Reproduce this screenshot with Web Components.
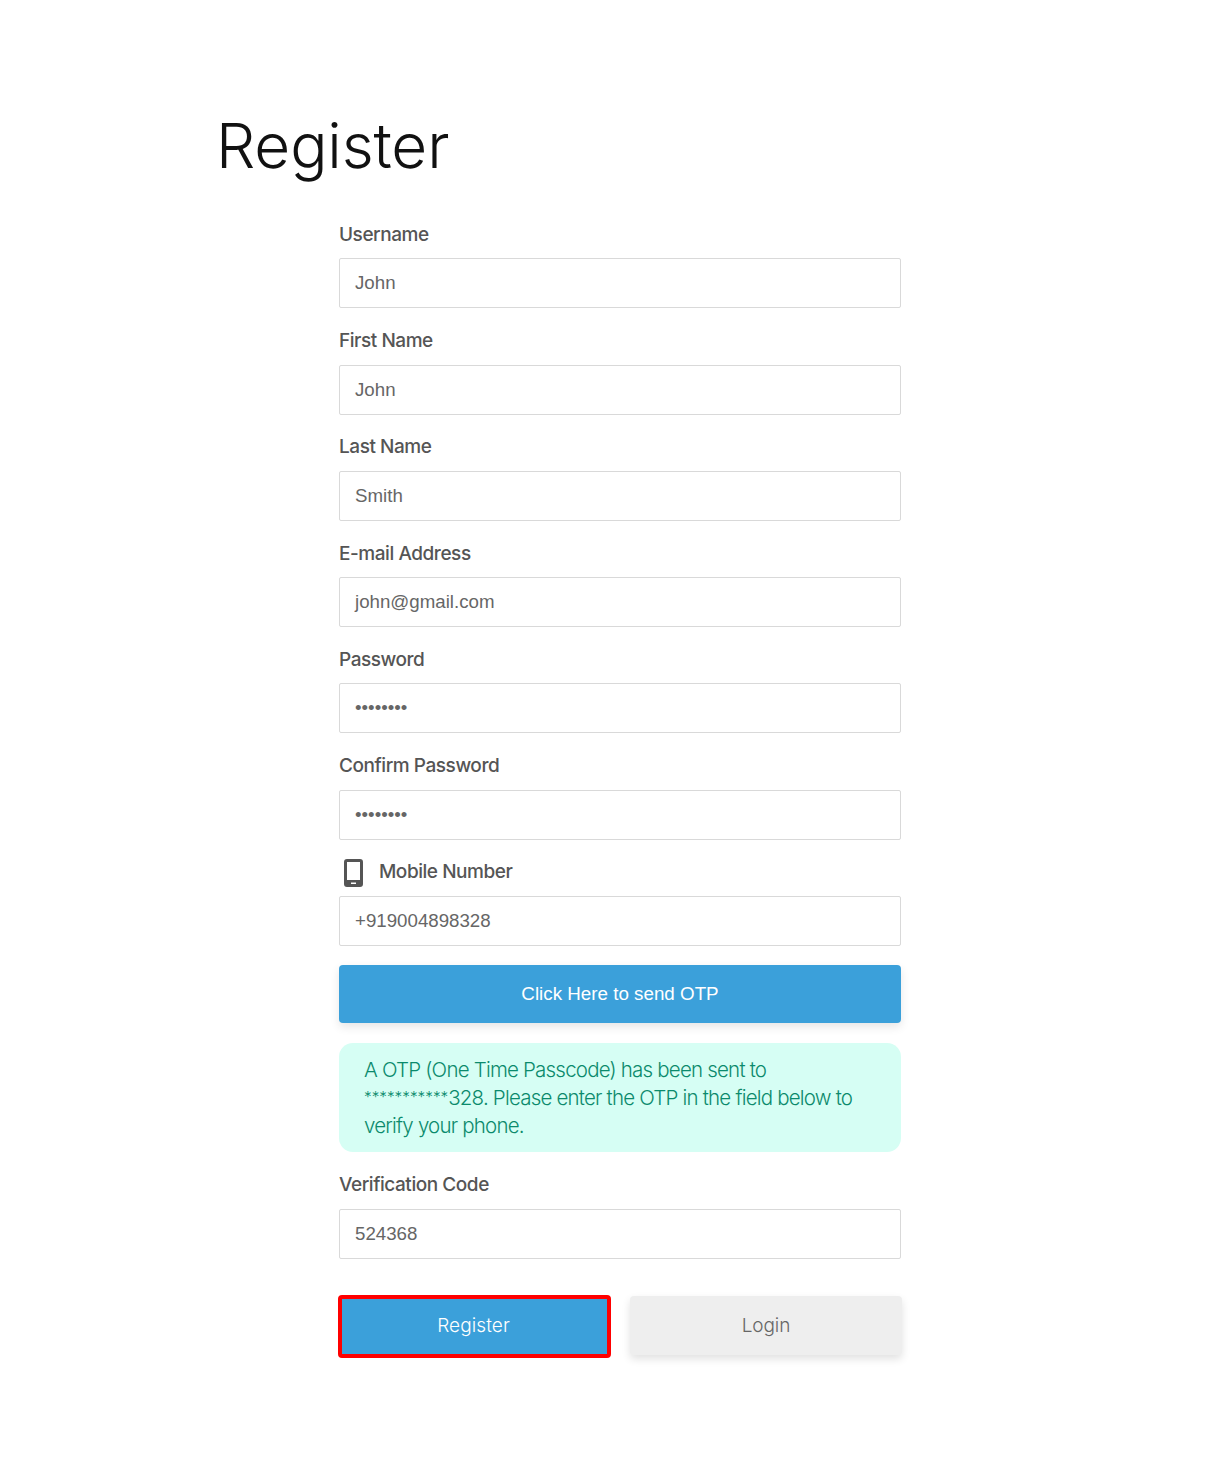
<!DOCTYPE html>
<html>
<head>
<meta charset="utf-8">
<title>Register</title>
<style>
  html, body { margin: 0; background: #fff; }
</style>
</head>
<body>
<register-page>
  <form-field label="Username" value="John"></form-field>
  <form-field label="First Name" value="John"></form-field>
  <form-field label="Last Name" value="Smith"></form-field>
  <form-field label="E-mail Address" value="john@gmail.com"></form-field>
  <form-field label="Password" value="••••••••"></form-field>
  <form-field label="Confirm Password" value="••••••••"></form-field>
  <form-field label="Mobile Number" value="+919004898328" phone></form-field>
  <otp-button>Click Here to send OTP</otp-button>
  <otp-alert>A OTP (One Time Passcode) has been sent to <span style="font-size:15.300px;letter-spacing:0;vertical-align:2px">***********</span>328. Please enter the OTP in the field below to<br>verify your phone.</otp-alert>
  <form-field label="Verification Code" value="524368" code></form-field>
  <form-actions></form-actions>
</register-page>

<script>
class RegisterPage extends HTMLElement {
  constructor() {
    super()
    this.attachShadow({ mode: 'open' }).innerHTML = `
      <style>
        :host {
          display: block;
          height: 1462px;
          padding: 104px 0 0 216px;
          box-sizing: border-box;
          font-family: Inter, "Liberation Sans", sans-serif;
        }
        h1 {
          margin: 0 0 30.450px;
          height: 84px;
          line-height: 84px;
          font-size: 62px;
          font-weight: 300;
          color: #111;
          letter-spacing: -0.15px;
        }
        .form {
          width: 562px;
          margin-left: 123px;
        }
      </style>
      <h1>Register</h1>
      <div class="form"><slot></slot></div>
    `
  }
}
customElements.define('register-page', RegisterPage)

class FormField extends HTMLElement {
  constructor() {
    super()
    this.attachShadow({ mode: 'open' })
  }

  connectedCallback() {
    const icon = this.hasAttribute('phone') ? `
      <svg width="19" height="28" viewBox="0 0 19 28">
        <path fill="#555" fill-rule="evenodd" d="M3 0h13a3 3 0 0 1 3 3v22a3 3 0 0 1-3 3H3a3 3 0 0 1-3-3V3a3 3 0 0 1 3-3zM3 3v18h13V3zM7 23.500v1.500h5v-1.500z"/>
      </svg>` : ''
    this.shadowRoot.innerHTML = `
      <style>
        :host {
          display: block;
          height: 106.250px;
        }
        :host([code]) { height: auto; margin-top: 17px; }
        label {
          display: flex;
          align-items: center;
          gap: 15.700px;
          height: 32px;
          margin-bottom: 8px;
          font-size: 19px;
          font-weight: 500;
          letter-spacing: -0.45px;
          color: #555;
        }
        :host([phone]) svg { margin: 2px 0 0 5.300px; flex: none; }
        .input {
          box-sizing: border-box;
          height: 50px;
          padding: 0 15px;
          display: flex;
          align-items: center;
          border: 1px solid #d9d9d9;
          border-radius: 2px;
          background: #fff;
          font-family: "Liberation Sans", Arial, sans-serif;
          font-size: 18.700px;
          color: #666;
        }
      </style>
      <label>${icon}<span>${this.getAttribute('label')}</span></label>
      <div class="input">${this.getAttribute('value')}</div>
    `
  }
}
customElements.define('form-field', FormField)

class OtpButton extends HTMLElement {
  constructor() {
    super()
    this.attachShadow({ mode: 'open' }).innerHTML = `
      <style>
        :host {
          display: flex;
          align-items: center;
          justify-content: center;
          height: 58px;
          margin-top: 2.800px;
          border-radius: 4px;
          background: #3ba0da;
          box-shadow: 0 4px 10px rgba(0, 0, 0, 0.1);
          font-family: "Liberation Sans", Arial, sans-serif;
          font-size: 18.800px;
          color: #fff;
        }
      </style>
      <slot></slot>
    `
  }
}
customElements.define('otp-button', OtpButton)

class OtpAlert extends HTMLElement {
  constructor() {
    super()
    this.attachShadow({ mode: 'open' }).innerHTML = `
      <style>
        :host {
          display: block;
          box-sizing: border-box;
          height: 109px;
          margin-top: 20px;
          padding: 13px 25px 0;
          border-radius: 14px;
          background: #d6fef4;
          color: #0b8a6c;
          font-size: 20.500px;
          font-weight: 300;
          line-height: 28px;
          letter-spacing: -0.8px;
        }
      </style>
      <slot></slot>
    `
  }
}
customElements.define('otp-alert', OtpAlert)

class FormActions extends HTMLElement {
  constructor() {
    super()
    this.attachShadow({ mode: 'open' }).innerHTML = `
      <style>
        :host {
          display: grid;
          grid-template-columns: 272px 272px;
          gap: 19px;
          margin-top: 37px;
          width: 564px;
        }
        button {
          margin: 0;
          border: 0;
          border-radius: 4px;
          font-family: inherit;
          font-size: 19px;
          font-weight: 300;
          letter-spacing: -0.1px;
        }
        .primary {
          box-sizing: border-box;
          width: 273px;
          height: 63px;
          margin: -1px 0 0 -1px;
          padding: 0 2px 2px 0;
          background: #3ba0da;
          color: #fff;
          border: 4px solid #f00;
          letter-spacing: 0.1px;
        }
        .secondary {
          height: 59px;
          background: #eee;
          color: #666;
          box-shadow: 0 4px 8px rgba(0, 0, 0, 0.12);
        }
      </style>
      <button class="primary">Register</button>
      <button class="secondary">Login</button>
    `
  }
}
customElements.define('form-actions', FormActions)
</script>
</body>
</html>
